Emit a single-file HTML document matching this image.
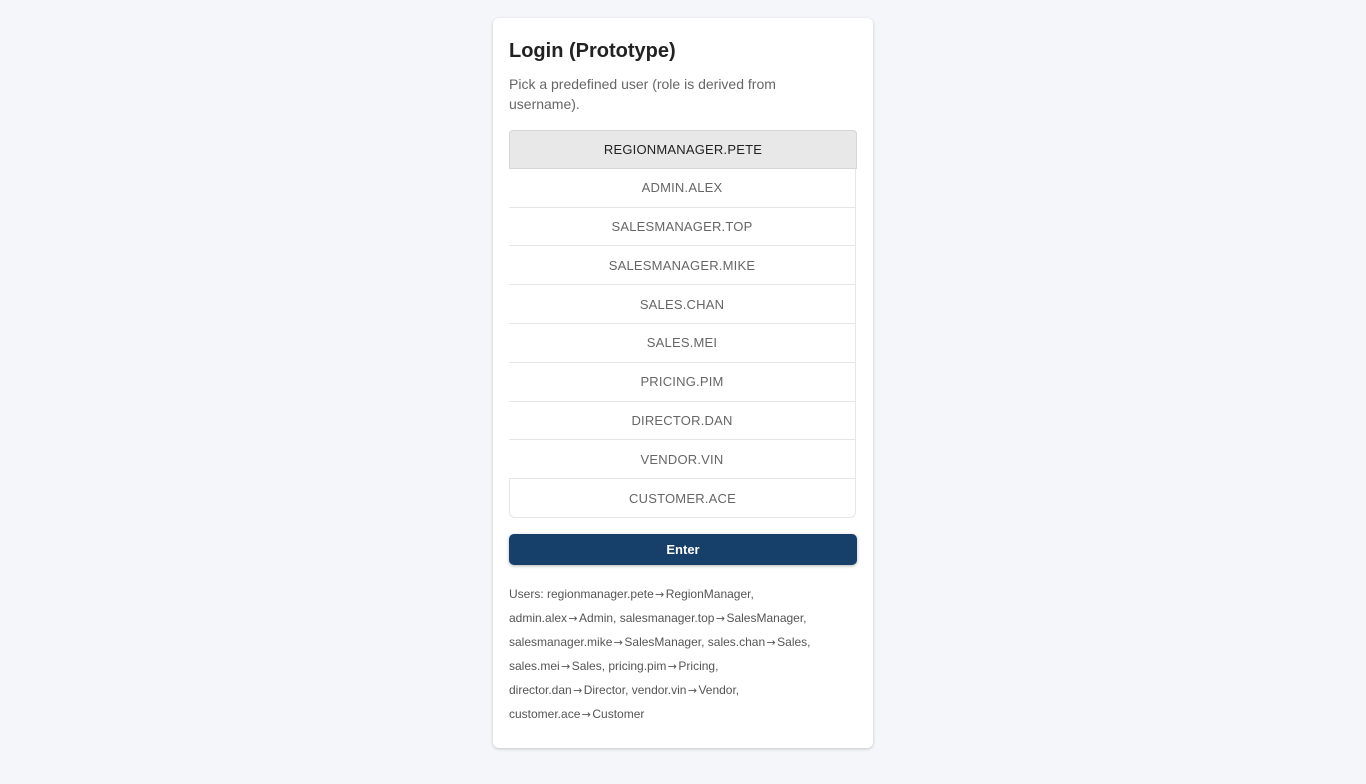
<!DOCTYPE html>
<html><head><style>
body{margin:0;background:#f5f6fa;font-family:"Liberation Sans",sans-serif;width:1366px;height:784px;overflow:hidden}
.card{position:absolute;left:493px;top:18px;width:380px;height:730px;box-sizing:border-box;background:#fff;border-radius:6px;box-shadow:0 1px 3px rgba(0,0,0,.2);padding:0 16px}
h1{margin:0;position:absolute;top:21px;left:16px;font-size:20px;font-weight:bold;color:#222;line-height:24px}
.sub{position:absolute;top:56px;left:16px;width:320px;font-size:14px;line-height:20px;color:#666}
.list{position:absolute;top:112px;left:16px;width:348px}
.b{height:38.8px;box-sizing:border-box;border:1px solid #e6e6e6;border-top:none;border-left:none;display:flex;align-items:center;justify-content:center;font-size:13px;color:#666;letter-spacing:.2px;width:347px}
.b.sel{background:#e8e8e8;border:1px solid #d6d6d6;border-radius:4px 4px 0 0;color:#222;width:348px}
.b.last{border:1px solid #e6e6e6;border-radius:0 0 6px 6px;border-top:none}
.enter{position:absolute;top:516px;left:16px;width:348px;height:31px;background:#163f6a;border-radius:5px;color:#fff;font-size:13px;font-weight:bold;display:flex;align-items:center;justify-content:center;box-shadow:0 1px 3px rgba(0,0,0,.3)}
.foot{position:absolute;top:564px;left:16px;width:348px;font-size:12px;line-height:24px;color:#555;white-space:nowrap}
.foot span{display:inline-block;width:12px;text-align:center;line-height:12px;font-family:"DejaVu Sans",sans-serif;font-size:11px}
</style></head><body>
<div class="card">
<h1>Login (Prototype)</h1>
<div class="sub">Pick a predefined user (role is derived from username).</div>
<div class="list">
<div class="b sel">REGIONMANAGER.PETE</div>
<div class="b">ADMIN.ALEX</div>
<div class="b">SALESMANAGER.TOP</div>
<div class="b">SALESMANAGER.MIKE</div>
<div class="b">SALES.CHAN</div>
<div class="b">SALES.MEI</div>
<div class="b">PRICING.PIM</div>
<div class="b">DIRECTOR.DAN</div>
<div class="b">VENDOR.VIN</div>
<div class="b last">CUSTOMER.ACE</div>
</div>
<div class="enter">Enter</div>
<div class="foot">Users: regionmanager.pete<span>→</span>RegionManager,<br>admin.alex<span>→</span>Admin, salesmanager.top<span>→</span>SalesManager,<br>salesmanager.mike<span>→</span>SalesManager, sales.chan<span>→</span>Sales,<br>sales.mei<span>→</span>Sales, pricing.pim<span>→</span>Pricing,<br>director.dan<span>→</span>Director, vendor.vin<span>→</span>Vendor,<br>customer.ace<span>→</span>Customer</div>
</div>
</body></html>
